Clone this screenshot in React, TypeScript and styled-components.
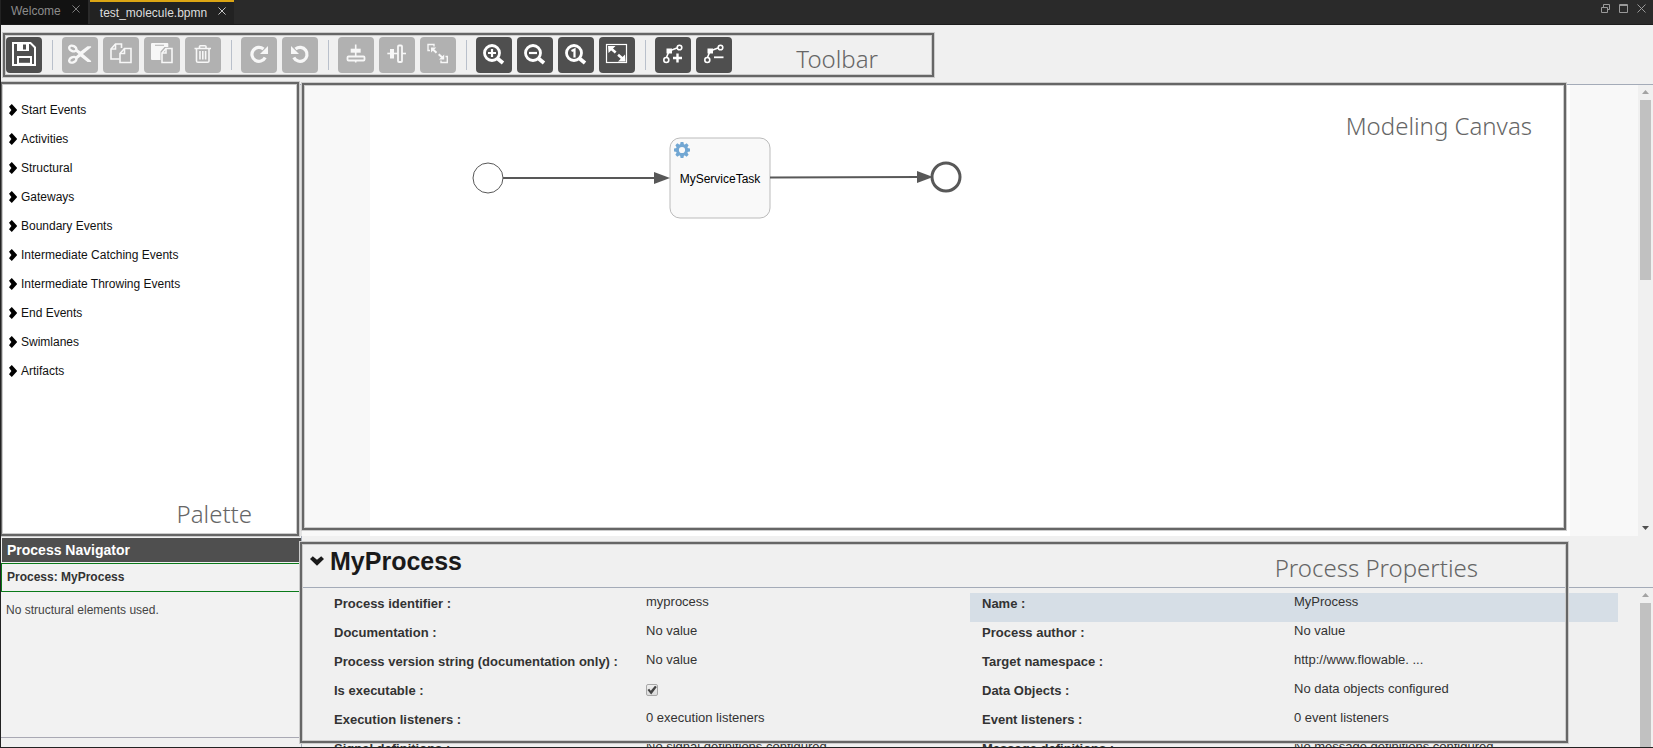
import React, { useState } from "react";
import styled, { createGlobalStyle, css } from "styled-components";

const GlobalStyle = createGlobalStyle`
  * { box-sizing: border-box; }
  body {
    margin: 0;
    background: #f0f0f0;
    color: #333;
    font-family: "Liberation Sans", Arial, sans-serif;
    font-size: 12px;
    line-height: 18px;
  }
  button { font: inherit; color: inherit; border: 0; padding: 0; background: none; cursor: pointer; }
`;

const Window = styled.div`
  display: flex;
  flex-direction: column;
  height: 100vh;
  overflow: hidden;
  border-left: 1px solid #222;
  border-bottom: 1px solid #222;
`;

/* ---------- Tab bar ---------- */

const TabBar = styled.header`
  display: flex;
  flex: none;
  height: 25px;
  background: #2a2a2a;
  border-bottom: 1px solid #1c1c1c;
`;

const Tab = styled.div<{ $active?: boolean }>`
  display: flex;
  align-items: flex-start;
  gap: 11px;
  padding: 2px 8px 0 10px;
  margin-right: 2px;
  color: ${(p) => (p.$active ? "#ddd" : "#8c8c8c")};
  background: ${(p) => (p.$active ? "#222" : "#121212")};
  border-top: ${(p) => (p.$active ? "2px solid #dba514" : "0")};
`;

const TabClose = styled.button`
  display: flex;
  padding-top: 3px;
`;

const WindowButtons = styled.div`
  display: flex;
  gap: 9px;
  margin-left: auto;
  padding: 4px 7px 0 0;
  color: #999;
`;

const WindowButton = styled.button`
  display: flex;
  width: 9px;
  height: 9px;
`;

/* ---------- Annotation frames ---------- */

const Frame = styled.div`
  position: absolute;
  display: flex;
  border: 2px solid #666;
  box-shadow: 0 0 0 1px #ccc, inset 0 0 0 1px #ccc;
  pointer-events: none;
  color: #666;
  font-family: "Noto Sans", sans-serif;
  font-size: 24px;
  font-weight: 350;
  line-height: 32px;
`;

const ToolbarFrame = styled(Frame)`
  top: 8px;
  left: 2px;
  width: 931px;
  bottom: 7px;
  justify-content: flex-end;
  align-items: center;
  padding: 7px 54px 0 0;
`;

const PaletteFrame = styled(Frame)`
  inset: -3px 0 0 0;
  border-left-width: 1px;
  justify-content: flex-end;
  align-items: flex-end;
  padding: 0 45px 4px 0;
`;

const CanvasFrame = styled(Frame)`
  inset: -2px 87px 6px 0;
  justify-content: flex-end;
  padding: 25px 32px 0 0;
`;

const PropertiesFrame = styled(Frame)`
  inset: 6px 85px 4px -2px;
  justify-content: flex-end;
  padding: 8px 88px 0 0;
`;

/* ---------- Toolbar ---------- */

const Toolbar = styled.nav`
  position: relative;
  display: flex;
  flex: none;
  align-items: center;
  gap: 5px;
  height: 60px;
  padding: 0 5px 0 5px;
  background: #f0f0f0;
  border-bottom: 1px solid #a4abb8;
`;

const ToolButton = styled.button`
  width: 36px;
  height: 36px;
  border-radius: 4px;
  background: #4f4f4f;
  color: #fff;
  &:disabled {
    background: #b1b1b1;
    color: #f7f7f7;
    cursor: default;
  }
`;

const ToolIcon = styled.svg`
  display: block;
  width: 36px;
  height: 36px;
  fill: none;
  stroke: currentColor;
  stroke-width: 2;
  .solid { fill: currentColor; stroke: none; }
  .thin { stroke-width: 1.4; }
  .thick { stroke-width: 3.2; }
`;

const Separator = styled.span`
  width: 1px;
  height: 30px;
  margin: 0 4px 0 5px;
  background: #b9c0cb;
`;

/* ---------- Workspace ---------- */

const Workspace = styled.main`
  display: grid;
  flex: 1;
  min-height: 0;
  grid-template-columns: 301px minmax(0, 1fr);
  grid-template-rows: minmax(0, 1fr) 211px;
`;

const Palette = styled.aside`
  position: relative;
  padding: 10px 0 0 8px;
  border-right: 3px solid #e4e4e4;
  background: #fff;
`;

const PaletteList = styled.ul`
  margin: 0;
  padding: 0;
  list-style: none;
`;

const PaletteButton = styled.button`
  display: flex;
  align-items: center;
  gap: 4px;
  height: 29px;
  color: #111;
`;

const Stage = styled.section`
  position: relative;
  display: flex;
  min-width: 0;
  background: #f8f8f8;
`;

const Viewport = styled.div`
  flex: 1;
  min-width: 0;
  overflow: hidden;
`;

const Diagram = styled.svg`
  display: block;
  width: 1200px;
  height: 100%;
  margin: 0 auto;
  background: #fff;
  text { font-size: 12px; fill: #000; text-anchor: middle; }
`;

const ScrollTrack = styled.div`
  display: flex;
  flex: none;
  flex-direction: column;
  width: 15px;
  padding: 5px 2px 6px 2px;
  gap: 5px;
  background: #f0f0f0;
`;

const ScrollThumb = styled.div<{ $length?: number }>`
  ${(p) => (p.$length ? css`height: ${p.$length}px; margin-bottom: auto;` : css`flex: 1; margin-bottom: -6px;`)}
  background: #c1c1c1;
`;

const ScrollArrow = styled.svg`
  flex: none;
  align-self: center;
  display: block;
  width: 7px;
  height: 5px;
`;

/* ---------- Navigator ---------- */

const Navigator = styled.section`
  display: flex;
  flex-direction: column;
  padding-top: 2px;
  border-right: 1px solid #aab0bc;
  background: #f2f2f2;
`;

const NavigatorTitle = styled.h2`
  margin: 0 0 1px 1px;
  padding: 3px 5px;
  font-size: 14px;
  line-height: 18px;
  color: #fff;
  background: #4f4f4f;
`;

const NavigatorProcess = styled.div`
  height: 29px;
  padding: 4px 5px;
  border: 1px solid #0a7a1a;
  border-right: 0;
  font-weight: bold;
`;

const NavigatorEmpty = styled.p`
  flex: 1;
  margin: 0;
  padding: 9px 5px;
  color: #444;
`;

const NavigatorFooter = styled.div`
  height: 10px;
  border-top: 1px solid #a9a9b4;
  background: #f0f0f0;
`;

/* ---------- Properties ---------- */

const Properties = styled.section`
  position: relative;
  display: flex;
  flex-direction: column;
  min-width: 0;
  background: #f0f0f0;
`;

const PropertiesTitle = styled.h1`
  flex: none;
  height: 52px;
  margin: 0;
  padding: 9px 0 0 8px;
  border-bottom: 1px solid #a4abb8;
  font-size: 25px;
  line-height: 32px;
  color: #1a1a1a;
`;

const TitleToggle = styled.button`
  display: flex;
  align-items: center;
  gap: 6px;
`;

const PropertiesBody = styled.div`
  display: flex;
  flex: 1;
  min-height: 0;
`;

const PropertyGrid = styled.dl`
  display: grid;
  flex: 1;
  grid-template-columns: 1fr 1fr;
  grid-auto-rows: 29px;
  margin: 0;
  padding: 5px 20px 0;
  overflow: hidden;
  font-size: 13px;
`;

const Property = styled.div<{ $selected?: boolean }>`
  display: grid;
  grid-template-columns: 1fr 1fr;
  background: ${(p) => (p.$selected ? "#d6dee6" : "none")};
`;

const PropertyName = styled.dt`
  padding: 2px 0 0 12px;
  font-weight: bold;
  white-space: nowrap;
`;

const PropertyValue = styled.dd`
  margin: 0;
  white-space: nowrap;
`;

const CheckBox = styled.input`
  appearance: none;
  display: block;
  width: 12px;
  height: 12px;
  margin: 4px 0 0;
  border: 1px solid #a8a8a8;
  border-radius: 2px;
  background: linear-gradient(#eee, #dcdcdc);
  &:checked::before {
    content: "";
    display: block;
    height: 10px;
    background: #444;
    clip-path: polygon(5% 50%, 22% 38%, 38% 58%, 80% 8%, 98% 20%, 42% 95%);
  }
`;

/* ---------- Icons ---------- */

const icons: Record<string, React.ReactNode> = {
  save: (
    <>
      <path d="M7 6H24.500L29 10.500V28H7Z" />
      <path className="solid" fillRule="evenodd" d="M11 6H23V14H11ZM17 7.500V12.500H20V7.500Z" />
      <path d="M12 28V20H25V28" />
      <path d="M12 26.500H25" className="thin" />
    </>
  ),
  cut: (
    <>
      <ellipse cx="10.800" cy="11.500" rx="3.800" ry="2.600" strokeWidth="2.400" transform="rotate(25 10.800 11.500)" />
      <ellipse cx="10.800" cy="22.800" rx="3.800" ry="2.600" strokeWidth="2.400" transform="rotate(-25 10.800 22.800)" />
      <path className="solid" d="M14.500 11.800 18.500 14.600 25.500 9.200 29 9.300 29.200 10.300 21 17.100 29.200 23.900 29 24.900 25.500 25 18.500 19.600 14.500 22.400 12.800 20.200 16.500 17.100 12.800 14Z" />
    </>
  ),
  copy: (
    <g strokeWidth="1.600">
      <path d="M16.500 22H8V12L12.500 7H18.500V11" />
      <path d="M12.500 7V12H8" />
      <path d="M17 16.500 21.500 11.500H28V25.500H17Z" />
      <path d="M21.500 11.500V16.500H17" />
    </g>
  ),
  paste: (
    <>
      <path className="solid" fillRule="evenodd" d="M8 6H23.500Q24.300 6 24.300 7V10H20.500L16.500 14.500V23H8Q7 23 7 22V7Q7 6 8 6ZM11 7.700V8.700H20V7.700Z" />
      <g strokeWidth="1.600">
        <path d="M18 16 22 11.500H28V25.500H18Z" />
        <path d="M22 11.500V16H18" />
      </g>
    </>
  ),
  trash: (
    <g strokeWidth="1.600">
      <path d="M9.500 11.500H26M14.500 11V9.500Q14.500 8.800 15.300 8.800H20Q21 8.800 21 9.500V11" />
      <path d="M11.500 12V24Q11.500 25.300 13 25.300H22.500Q24 25.300 24 24V12" />
      <path d="M15 14V22.500M17.800 14V22.500M20.600 14V22.500" />
    </g>
  ),
  redo: (
    <>
      <path className="thick" d="M24.200 20.500A7 7 0 1 1 22.500 12" />
      <path className="solid" d="M27 9V17H19Z" />
    </>
  ),
  undo: (
    <>
      <path className="thick" d="M11.800 20.500A7 7 0 1 0 13.500 12" />
      <path className="solid" d="M9 9V17H17Z" />
    </>
  ),
  alignV: (
    <>
      <path d="M17.700 7.500V25.500" strokeWidth="1.600" />
      <path className="solid" d="M12.700 11.700H22.700V15.700H12.700Z" />
      <rect x="9.500" y="19.500" width="17" height="4" rx="1" fill="#b1b1b1" strokeWidth="1.800" />
    </>
  ),
  alignH: (
    <>
      <path d="M8.300 16.500H27" strokeWidth="1.600" />
      <path className="solid" d="M11 12H15V21.500H11Z" />
      <rect x="19" y="8.500" width="4" height="16.500" rx="1" fill="#b1b1b1" strokeWidth="1.800" />
    </>
  ),
  sameSize: (
    <g className="thin">
      <path d="M10 13.500H8V7.500H14V9.500" />
      <path d="M25.500 19.500H27.300V25.500H21V23.500" />
      <path d="M13 12.500 16.500 15.800M18.700 17.200 22.500 20.800" strokeWidth="2" />
      <path className="solid" d="M11 10.500H16.300L11 15.500ZM24.200 22.500V17.500L19 22.500Z" />
    </g>
  ),
  zoomIn: (
    <>
      <circle cx="16" cy="16" r="7.500" strokeWidth="2.800" />
      <path d="M16 12V20M12 16H20" strokeWidth="2.200" />
      <path d="M21.500 21.500 27 26" strokeWidth="3.800" />
    </>
  ),
  zoomOut: (
    <>
      <circle cx="16" cy="16" r="7.500" strokeWidth="2.800" />
      <path d="M12 16H20" strokeWidth="2.200" />
      <path d="M21.500 21.500 27 26" strokeWidth="3.800" />
    </>
  ),
  zoomActual: (
    <>
      <circle cx="16" cy="16" r="7.500" strokeWidth="2.800" />
      <path d="M13.500 14 16.500 12.500V20.500" strokeWidth="2.200" />
      <path d="M21.500 21.500 27 26" strokeWidth="3.800" />
    </>
  ),
  zoomFit: (
    <>
      <rect x="7.500" y="7.500" width="20" height="18" strokeWidth="1.200" />
      <path d="M12 11.500 24 22" strokeWidth="2.600" strokeDasharray="6.200 3.200" />
      <path className="solid" d="M9 9H16.500L9.500 16ZM26.500 24.500H19L26 17.500Z" />
    </>
  ),
  bendAdd: (
    <>
      <circle cx="11.300" cy="23" r="2.500" strokeWidth="1.600" />
      <circle cx="24.500" cy="10.500" r="2.300" strokeWidth="1.600" />
      <path d="M11.500 20.500 14 14 22 11" strokeWidth="1.600" />
      <path className="solid" d="M11.500 11.500H17V16.500H11.500Z" />
      <path d="M22.500 16.500V25.500M18 21H27" strokeWidth="2.400" />
    </>
  ),
  bendRemove: (
    <>
      <circle cx="11.300" cy="23" r="2.500" strokeWidth="1.600" />
      <circle cx="24.500" cy="10.500" r="2.300" strokeWidth="1.600" />
      <path d="M11.500 20.500 14 14 22 11" strokeWidth="1.600" />
      <path className="solid" d="M11.500 11.500H17V16.500H11.500Z" />
      <path d="M18 20.300H27.500" strokeWidth="1.800" />
    </>
  ),
};

const CloseIcon = ({ size }: { size: number }) => (
  <svg width={size} height={size} viewBox="0 0 9 9" stroke="currentColor" strokeWidth="1" fill="none">
    <path d="M.5.5 8.500 8.500M8.500.5.5 8.500" />
  </svg>
);

const ChevronRight = () => (
  <svg width="8" height="12" viewBox="0 0 8 12" aria-hidden="true">
    <path d="M2.800 0 8.200 6 2.800 12 0 9.200 2.400 6 0 2.800Z" fill="#000" />
  </svg>
);

const ChevronDown = () => (
  <svg width="14" height="10" viewBox="0 0 14 10" aria-hidden="true">
    <path d="M0 2.900 2.800.3 7 3.800 11.200.3 14 2.900 7 9.800Z" fill="#1a1a1a" />
  </svg>
);

const toothAngles = [0, 45, 90, 135, 180, 225, 270, 315];

const Gear = ({ x, y }: { x: number; y: number }) => (
  <g transform={`translate(${x} ${y})`} fill="#72a7d3">
    {toothAngles.map((a) => (
      <path key={a} d="M-2-5-1.400-8H1.400L2-5Z" transform={`rotate(${a})`} />
    ))}
    <circle r="4.600" fill="none" stroke="#72a7d3" strokeWidth="3" />
  </g>
);

/* ---------- Data ---------- */

type Tool = { icon: string; label: string; disabled?: boolean };

const toolGroups: Tool[][] = [
  [{ icon: "save", label: "Save" }],
  [
    { icon: "cut", label: "Cut", disabled: true },
    { icon: "copy", label: "Copy", disabled: true },
    { icon: "paste", label: "Paste", disabled: true },
    { icon: "trash", label: "Delete", disabled: true },
  ],
  [
    { icon: "redo", label: "Redo", disabled: true },
    { icon: "undo", label: "Undo", disabled: true },
  ],
  [
    { icon: "alignV", label: "Align vertically", disabled: true },
    { icon: "alignH", label: "Align horizontally", disabled: true },
    { icon: "sameSize", label: "Same size", disabled: true },
  ],
  [
    { icon: "zoomIn", label: "Zoom in" },
    { icon: "zoomOut", label: "Zoom out" },
    { icon: "zoomActual", label: "Actual size" },
    { icon: "zoomFit", label: "Fit to screen" },
  ],
  [
    { icon: "bendAdd", label: "Add bend point" },
    { icon: "bendRemove", label: "Remove bend point" },
  ],
];

const paletteGroups = [
  "Start Events",
  "Activities",
  "Structural",
  "Gateways",
  "Boundary Events",
  "Intermediate Catching Events",
  "Intermediate Throwing Events",
  "End Events",
  "Swimlanes",
  "Artifacts",
];

const properties: { name: string; value?: string; selected?: boolean }[] = [
  { name: "Process identifier", value: "myprocess" },
  { name: "Name", value: "MyProcess", selected: true },
  { name: "Documentation", value: "No value" },
  { name: "Process author", value: "No value" },
  { name: "Process version string (documentation only)", value: "No value" },
  { name: "Target namespace", value: "http://www.flowable. ..." },
  { name: "Is executable" },
  { name: "Data Objects", value: "No data objects configured" },
  { name: "Execution listeners", value: "0 execution listeners" },
  { name: "Event listeners", value: "0 event listeners" },
  { name: "Signal definitions", value: "No signal definitions configured" },
  { name: "Message definitions", value: "No message definitions configured" },
];

/* ---------- Page ---------- */

export default function App() {
  const [executable, setExecutable] = useState(true);

  return (
    <>
      <GlobalStyle />
      <Window>
        <TabBar>
          <Tab>
            Welcome
            <TabClose aria-label="Close Welcome"><CloseIcon size={8} /></TabClose>
          </Tab>
          <Tab $active>
            test_molecule.bpmn
            <TabClose aria-label="Close test_molecule.bpmn"><CloseIcon size={8} /></TabClose>
          </Tab>
          <WindowButtons>
            <WindowButton aria-label="Restore">
              <svg width="9" height="9" viewBox="0 0 9 9" fill="none" stroke="currentColor">
                <path d="M.5 3.500H6.500V8.500H.5ZM2.500 3.500V.5H8.500V5.500H6.500" />
              </svg>
            </WindowButton>
            <WindowButton aria-label="Maximize">
              <svg width="9" height="9" viewBox="0 0 9 9" fill="none" stroke="currentColor">
                <path d="M.5.5H8.500V8.500H.5ZM0 1.500H9" />
              </svg>
            </WindowButton>
            <WindowButton aria-label="Close"><CloseIcon size={9} /></WindowButton>
          </WindowButtons>
        </TabBar>

        <Toolbar aria-label="Editor tools">
          {toolGroups.map((group, i) => (
            <React.Fragment key={i}>
              {i > 0 && <Separator />}
              {group.map((tool) => (
                <ToolButton key={tool.icon} aria-label={tool.label} disabled={tool.disabled}>
                  <ToolIcon viewBox="0 0 36 36">{icons[tool.icon]}</ToolIcon>
                </ToolButton>
              ))}
            </React.Fragment>
          ))}
          <ToolbarFrame>Toolbar</ToolbarFrame>
        </Toolbar>

        <Workspace>
          <Palette>
            <PaletteList>
              {paletteGroups.map((name) => (
                <li key={name}>
                  <PaletteButton><ChevronRight />{name}</PaletteButton>
                </li>
              ))}
            </PaletteList>
            <PaletteFrame>Palette</PaletteFrame>
          </Palette>

          <Stage>
            <Viewport>
              <Diagram>
                <circle cx="118" cy="93" r="15" fill="#fff" stroke="#585858" />
                <path d="M133 93H286" stroke="#585858" strokeWidth="2" />
                <rect x="300" y="53" width="100" height="80" rx="10" fill="#f9f9f9" stroke="#bbb" />
                <path d="M284 87 300 93 284 99Z" fill="#585858" />
                <path d="M400 92.500 550 92" stroke="#585858" strokeWidth="2" />
                <circle cx="576" cy="92" r="14" fill="#fff" stroke="#585858" strokeWidth="3" />
                <path d="M547 86 563 92 547 98Z" fill="#585858" />
                <Gear x={312} y={65} />
                <text x="350" y="98">MyServiceTask</text>
              </Diagram>
            </Viewport>
            <ScrollTrack>
              <ScrollArrow viewBox="0 0 7 5"><path d="M3.500 0 7 4H0Z" fill="#a3a3a3" /></ScrollArrow>
              <ScrollThumb $length={180} />
              <ScrollArrow viewBox="0 0 7 5"><path d="M3.500 5 7 1H0Z" fill="#505050" /></ScrollArrow>
            </ScrollTrack>
            <CanvasFrame>Modeling Canvas</CanvasFrame>
          </Stage>

          <Navigator>
            <NavigatorTitle>Process Navigator</NavigatorTitle>
            <NavigatorProcess>Process: MyProcess</NavigatorProcess>
            <NavigatorEmpty>No structural elements used.</NavigatorEmpty>
            <NavigatorFooter />
          </Navigator>

          <Properties>
            <PropertiesTitle>
              <TitleToggle><ChevronDown />MyProcess</TitleToggle>
            </PropertiesTitle>
            <PropertiesBody>
              <PropertyGrid>
                {properties.map((p) => (
                  <Property key={p.name} $selected={p.selected}>
                    <PropertyName>
                      {p.value ? `${p.name} :` : <label htmlFor="executable">{p.name} :</label>}
                    </PropertyName>
                    <PropertyValue>
                      {p.value ?? (
                        <CheckBox
                          id="executable"
                          type="checkbox"
                          checked={executable}
                          onChange={(e) => setExecutable(e.target.checked)}
                        />
                      )}
                    </PropertyValue>
                  </Property>
                ))}
              </PropertyGrid>
              <ScrollTrack>
                <ScrollArrow viewBox="0 0 7 5"><path d="M3.500 0 7 4H0Z" fill="#a3a3a3" /></ScrollArrow>
                <ScrollThumb />
              </ScrollTrack>
            </PropertiesBody>
            <PropertiesFrame>Process Properties</PropertiesFrame>
          </Properties>
        </Workspace>
      </Window>
    </>
  );
}
